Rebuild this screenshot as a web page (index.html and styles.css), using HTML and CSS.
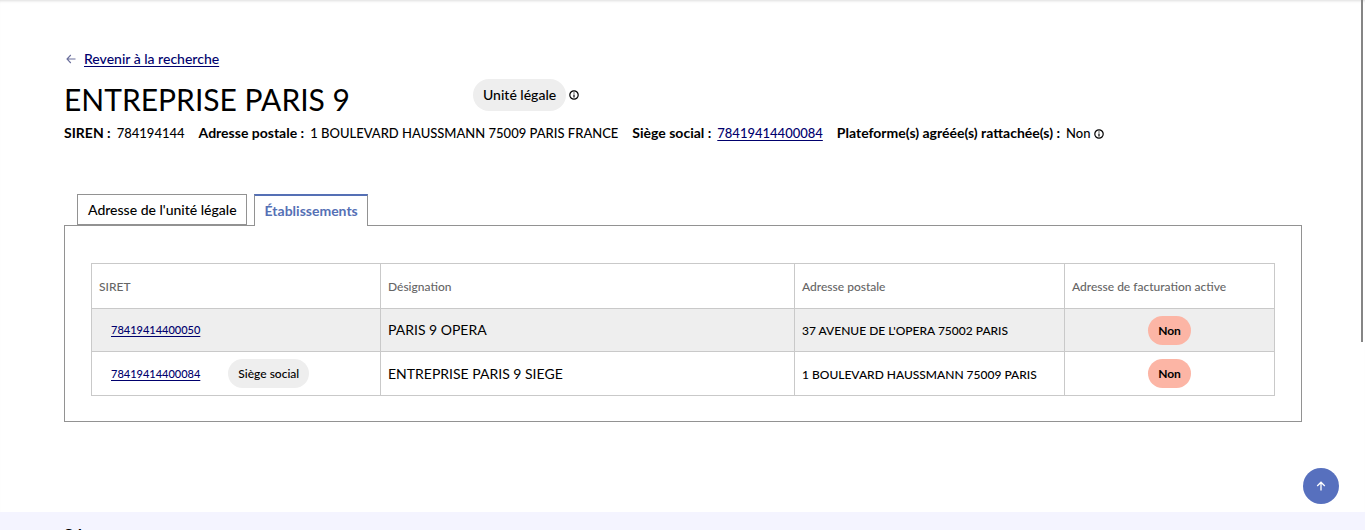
FILE: index.html
```html
<!DOCTYPE html>
<html lang="fr">
<head>
<meta charset="utf-8">
<meta name="viewport" content="width=device-width, initial-scale=1">
<title>Entreprise Paris 9</title>
<link rel="stylesheet" href="styles.css">
</head>
<body>
<div class="page">
  <main class="content">
    <a class="back" href="#recherche">
      <svg class="back-icon" viewBox="0 0 10 10" aria-hidden="true"><path d="M9.5 5H1M4.8 1L1 5l3.8 4"/></svg>
      <span class="back-label">Revenir à la recherche</span>
    </a>
    <div class="heading">
      <h1 class="title">ENTREPRISE PARIS 9</h1>
      <span class="badge badge-large">Unité légale</span>
      <svg class="info" viewBox="0 0 10 10" role="img" aria-label="Information"><circle cx="5" cy="5" r="4.2"/><path d="M5 4.4v3M5 2.4v1.1"/></svg>
    </div>
    <dl class="facts">
      <div class="fact"><dt>SIREN :</dt><dd>784194144</dd></div>
      <div class="fact"><dt>Adresse postale :</dt><dd>1 BOULEVARD HAUSSMANN 75009 PARIS FRANCE</dd></div>
      <div class="fact"><dt>Siège social :</dt><dd><a class="link" href="#siege">78419414400084</a></dd></div>
      <div class="fact"><dt>Plateforme(s) agréée(s) rattachée(s) :</dt><dd>Non<svg class="info" viewBox="0 0 10 10" role="img" aria-label="Information"><circle cx="5" cy="5" r="4.2"/><path d="M5 4.4v3M5 2.4v1.1"/></svg></dd></div>
    </dl>
    <div class="tabs" role="tablist">
      <button class="tab" type="button" role="tab" aria-selected="false">Adresse de l'unité légale</button>
      <button class="tab tab-active" type="button" role="tab" aria-selected="true">Établissements</button>
    </div>
    <section class="panel" role="tabpanel">
      <table class="table">
        <colgroup><col class="col-siret"><col class="col-name"><col class="col-address"><col class="col-active"></colgroup>
        <thead>
          <tr><th scope="col">SIRET</th><th scope="col">Désignation</th><th scope="col">Adresse postale</th><th scope="col">Adresse de facturation active</th></tr>
        </thead>
        <tbody>
          <tr>
            <td><div class="siret"><a class="link" href="#e50">78419414400050</a></div></td>
            <td class="name">PARIS 9 OPERA</td>
            <td class="address">37 AVENUE DE L'OPERA 75002 PARIS</td>
            <td class="active"><span class="badge badge-no">Non</span></td>
          </tr>
          <tr>
            <td><div class="siret"><a class="link" href="#e84">78419414400084</a><span class="badge">Siège social</span></div></td>
            <td class="name">ENTREPRISE PARIS 9 SIEGE</td>
            <td class="address">1 BOULEVARD HAUSSMANN 75009 PARIS</td>
            <td class="active"><span class="badge badge-no">Non</span></td>
          </tr>
        </tbody>
      </table>
    </section>
  </main>
  <footer class="footer"><strong>Sd</strong></footer>
</div>
<button class="to-top" type="button" aria-label="Haut de page"><svg class="to-top-icon" viewBox="0 0 10 10" aria-hidden="true"><path d="M5 9.5V1.2M1.2 5L5 1.2 8.8 5"/></svg></button>
<div class="scrollbar" aria-hidden="true"></div>
</body>
</html>
```
FILE: styles.css
```css
* { box-sizing: border-box; }

body {
  margin: 0;
  background: #fff;
  color: #000;
  font-family: Lato, "Noto Sans", sans-serif;
  font-size: 14px;
  font-weight: 500;
  line-height: 20px;
}

.page {
  display: flex;
  flex-direction: column;
  height: 100vh;
  overflow: hidden;
  box-shadow: inset 0 3px 3px -2px #ddd;
}

.content {
  flex: 1;
  padding: 49px 63px 0 64px;
}

.back {
  display: inline-flex;
  align-items: center;
  gap: 8px;
  padding-left: 2px;
  color: #00006d;
  text-decoration: none;
}

.back-label { text-decoration: underline; text-underline-offset: 2px; }
.back-icon { width: 10px; height: 10px; fill: none; stroke: #6a6f9c; stroke-width: 1.1; }

.heading { display: flex; align-items: center; height: 52px; margin-bottom: 2px; }

.title {
  width: 409px;
  margin: 0;
  padding-top: 8px;
  font-size: 30px;
  font-weight: 400;
  line-height: 40px;
}

.badge {
  display: inline-block;
  padding: 5px 10px;
  border-radius: 15px;
  background: #eee;
  font-size: 12px;
  line-height: 19px;
}

.badge-large { padding: 6px 10px; border-radius: 16px; font-size: 14px; line-height: 20px; }
.badge-no { background: #fcb5a5; font-weight: 700; }

.info { width: 10px; height: 10px; margin-left: 3px; fill: none; stroke: #000; stroke-width: 1.2; }

.facts { display: flex; gap: 14px; margin: 0; white-space: nowrap; }
.fact { display: flex; gap: 6px; }
.fact dt { font-weight: 700; }
.fact dd { margin: 0; font-size: 13px; }
.fact .info { vertical-align: -1px; }
.link { color: #00006d; text-underline-offset: 2px; }

.tabs { display: flex; gap: 7px; margin-top: 51px; padding-left: 13px; }

.tab {
  height: 31px;
  padding: 0 9px 0 10px;
  border: 1px solid #929292;
  background: #fff;
  color: #000;
  font: inherit;
}

.tab-active {
  height: 32px;
  margin-bottom: -1px;
  border-top: 2px solid #5570b5;
  border-bottom: 0;
  color: #5570b5;
  font-weight: 700;
  z-index: 1;
}

.panel { padding: 37px 26px 25px; border: 1px solid #929292; }

.table { width: 100%; border-collapse: collapse; table-layout: fixed; font-size: 12px; }
.col-siret { width: 289px; }
.col-address { width: 270px; }
.col-active { width: 210px; }

.table th, .table td { height: 43px; padding: 0 7px; border: 1px solid #c9c9c9; text-align: left; }
.table th { height: 45px; padding-top: 2px; color: #666; font-weight: 500; }
.table tbody tr:nth-child(odd) { background: #eee; }
.table tbody tr:last-child td { height: 44px; }

.siret { display: flex; align-items: center; gap: 28px; padding-left: 12px; }
.siret .link { font-size: 11px; }
.table .name { font-size: 14px; font-weight: 400; }
.table .address { padding-top: 2px; }
.table .active { text-align: center; }

.footer { flex: 0 0 18px; padding: 12px 64px 0; background: #f4f4ff; font-size: 16px; overflow: hidden; }

.to-top {
  position: fixed;
  right: 26px;
  bottom: 26px;
  display: grid;
  place-items: center;
  width: 36px;
  height: 36px;
  padding: 0;
  border: 0;
  border-radius: 50%;
  background: #5770be;
}

.to-top-icon { width: 10px; height: 10px; fill: none; stroke: #fff; stroke-width: 1.3; }

.scrollbar { position: fixed; top: 0; right: 2px; width: 2px; height: 342px; background: #858585; }
```
